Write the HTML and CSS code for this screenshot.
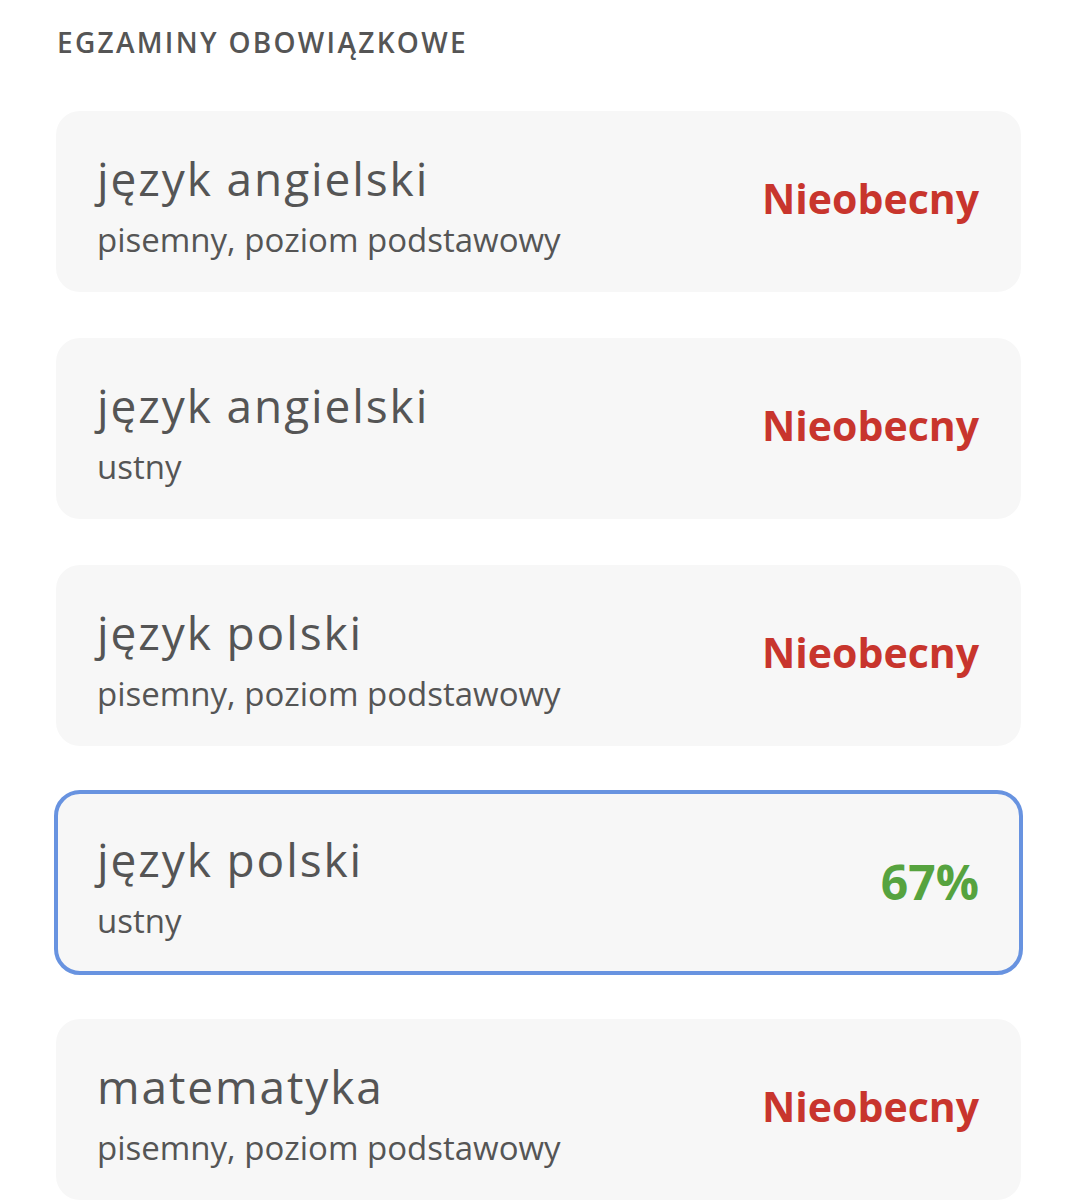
FILE: index.html
```html
<!DOCTYPE html>
<html lang="pl">
<head>
<meta charset="utf-8">
<link rel="stylesheet" href="styles.css">
</head>
<body>
<div class="page">
  <h2 class="section-title">EGZAMINY OBOWIĄZKOWE</h2>
  <div class="list">
    <div class="card">
      <div class="info">
        <div class="subject">język angielski</div>
        <div class="detail">pisemny, poziom podstawowy</div>
      </div>
      <div class="result absent">Nieobecny</div>
    </div>
    <div class="card">
      <div class="info">
        <div class="subject">język angielski</div>
        <div class="detail">ustny</div>
      </div>
      <div class="result absent">Nieobecny</div>
    </div>
    <div class="card">
      <div class="info">
        <div class="subject">język polski</div>
        <div class="detail">pisemny, poziom podstawowy</div>
      </div>
      <div class="result absent">Nieobecny</div>
    </div>
    <div class="card selected">
      <div class="info">
        <div class="subject">język polski</div>
        <div class="detail">ustny</div>
      </div>
      <div class="result score">67%</div>
    </div>
    <div class="card">
      <div class="info">
        <div class="subject">matematyka</div>
        <div class="detail">pisemny, poziom podstawowy</div>
      </div>
      <div class="result absent">Nieobecny</div>
    </div>
  </div>
</div>
</body>
</html>
```
FILE: styles.css
```css
html, body {
  margin: 0;
  padding: 0;
  background: #ffffff;
}
body {
  font-family: "Open Sans", "Noto Sans", sans-serif;
  color: #555555;
}
.page {
  padding: 24px 57px 0 56px;
}
.section-title {
  margin: 0 0 0 1px;
  font-size: 28px;
  line-height: 36px;
  font-weight: 600;
  letter-spacing: 2.3px;
  color: #555555;
}
.list {
  margin-top: 51px;
  display: flex;
  flex-direction: column;
  gap: 46px;
}
.card {
  background: #f7f7f7;
  border-radius: 24px;
  box-sizing: border-box;
  padding: 38px 42px 29px 41px;
  display: flex;
  align-items: center;
  justify-content: space-between;
}
.card.selected {
  outline: 4px solid #6893e0;
  outline-offset: -2px;
}
.info {
  display: flex;
  flex-direction: column;
  gap: 10px;
}
.subject {
  font-size: 46px;
  line-height: 58px;
  letter-spacing: 1.9px;
  font-weight: 500;
}
.detail {
  font-size: 33px;
  line-height: 46px;
}
.result {
  font-weight: 700;
}
.absent {
  font-size: 41px;
  margin-bottom: 16px;
  color: #c8352d;
}
.score {
  font-size: 48px;
  margin-bottom: 11px;
  color: #56a33f;
}
```
